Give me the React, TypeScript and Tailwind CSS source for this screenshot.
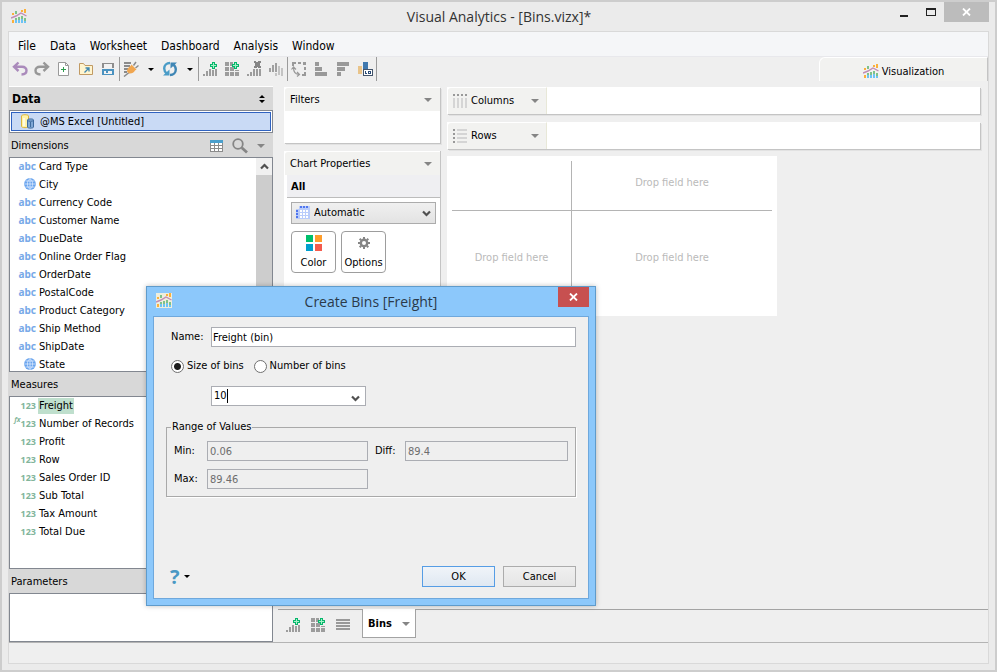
import React, { useState } from "react";

type IconProps = { className?: string };

const dimensions = [
  { name: "Card Type", kind: "abc" },
  { name: "City", kind: "geo" },
  { name: "Currency Code", kind: "abc" },
  { name: "Customer Name", kind: "abc" },
  { name: "DueDate", kind: "abc" },
  { name: "Online Order Flag", kind: "abc" },
  { name: "OrderDate", kind: "abc" },
  { name: "PostalCode", kind: "abc" },
  { name: "Product Category", kind: "abc" },
  { name: "Ship Method", kind: "abc" },
  { name: "ShipDate", kind: "abc" },
  { name: "State", kind: "geo" },
];

const measures = [
  { name: "Freight", calc: false },
  { name: "Number of Records", calc: true },
  { name: "Profit", calc: false },
  { name: "Row", calc: false },
  { name: "Sales Order ID", calc: false },
  { name: "Sub Total", calc: false },
  { name: "Tax Amount", calc: false },
  { name: "Total Due", calc: false },
];

const menus = ["File", "Data", "Worksheet", "Dashboard", "Analysis", "Window"];

// ---------- icons ----------

const LogoIcon = ({ className = "" }: IconProps) => (
  <svg className={className} width="16" height="15" viewBox="0 0 16 15" shapeRendering="crispEdges">
    <path fill="#fbb03b" d="M1 4h2v2H1zM10 1h2v2h-2zM13 0h2v4h-2zM1 11h2v3H1z" />
    <path fill="#7fc28a" d="M4 2h2v3H4zM4 9h2v2H4zM7 8h2v3H7zM10 7h2v3h-2zM13 9h2v3h-2z" />
    <path fill="#6cc3f5" d="M4 11h2v3H4zM7 11h2v3H7zM10 10h2v4h-2zM13 12h2v2h-2z" />
    <path fill="none" stroke="#c08bb5" strokeWidth="1.4" shapeRendering="auto" d="M0 9 5 7l5-3 5.500 3" />
  </svg>
);

const UndoIcon = () => (
  <svg width="16" height="16" viewBox="0 0 16 16" fill="none" stroke="#aa8abb" strokeWidth="2.4">
    <path d="M6.500 1.500 2 5.800l4.500 4.200M2.500 5.800h7.500c3 0 4.500 1.600 4.500 3.700S13 13.300 9.500 13.500" />
  </svg>
);

const RedoIcon = () => (
  <svg width="16" height="16" viewBox="0 0 16 16" fill="none" stroke="#979797" strokeWidth="2.4">
    <path d="M9.500 1.500l4.500 4.300-4.500 4.200M13.500 5.800H6c-3 0-4.500 1.600-4.500 3.700S3 13.300 6.500 13.500" />
  </svg>
);

const NewIcon = () => (
  <svg width="16" height="16" viewBox="0 0 16 16" fill="none">
    <path fill="#fff" stroke="#9a9a9a" d="M2.500 1.500h7l3 3v10h-10z" />
    <path stroke="#9a9a9a" d="M9.500 1.500v3h3" />
    <path stroke="#2f9e4f" d="M7.500 6v5M5 8.500h5" />
  </svg>
);

const OpenIcon = () => (
  <svg width="16" height="16" viewBox="0 0 16 16" fill="none">
    <path fill="#fff5cf" stroke="#c19a63" d="M1.500 2.500h4l1.500 2h7.500v9h-13z" />
    <path stroke="#3f87b0" strokeWidth="1.3" d="M6.500 11.500l4-4M7.500 7h3.500v3.500" />
  </svg>
);

const SaveIcon = () => (
  <svg width="16" height="16" viewBox="0 0 16 16" shapeRendering="crispEdges">
    <path fill="#8d8d8d" d="M2 2h12v5H2z" />
    <path fill="#f2f2f2" d="M4 3h8v4H4z" />
    <path fill="#4a92c0" d="M2 8h12v6H2z" />
    <path fill="#f2f2f2" d="M4 10h8v3H4z" />
    <path fill="#4a92c0" d="M6 10h2v2H6z" />
  </svg>
);

const PlugIcon = () => (
  <svg width="16" height="16" viewBox="0 0 16 16">
    <path fill="#8b8b8b" d="M1 1h7v2H1zM1 4h6v2H1zM1 7h4v2H1zM1 10h3v2H1z" />
    <path stroke="#8b8b8b" strokeWidth="1.5" d="M1 15.500l5-4M10.500 4.500 13 1M12.500 7l3-2.500" />
    <path fill="#f0a650" d="M8.500 3.500l5 5-1.500 1c-1 2-3.500 3.500-6 3L4 10.500c0-2.500 1.500-4.500 3.500-5.500z" />
  </svg>
);

const RefreshIcon = () => (
  <svg width="16" height="16" viewBox="0 0 16 16">
    <path fill="none" stroke="#4a9cc7" strokeWidth="2.400" d="M8 2C4.500 2 2.200 4.500 2.200 7.500c0 2 1 3.800 2.600 5" />
    <path fill="none" stroke="#3f86b5" strokeWidth="2.400" d="M8 14c3.500 0 5.800-2.500 5.800-5.500 0-2-1-3.800-2.600-5" />
    <path fill="#4a9cc7" d="M1 14.500h6.500V8.500z" />
    <path fill="#3f86b5" d="M15 1.500H8.500v6z" />
  </svg>
);

const Plus = ({ x, y }: { x: number; y: number }) => (
  <g>
    <path fill="#06b66b" d={`M${x + 2} ${y}h3v2h2v3h-2v2h-3v-2h-2v-3h2z`} />
    <path fill="#a5f0c8" d={`M${x + 3} ${y + 1}h1v2h2v1h-2v2h-1v-2h-2v-1h2z`} />
  </g>
);

const ChartAddIcon = () => (
  <svg width="16" height="16" viewBox="0 0 16 16" shapeRendering="crispEdges">
    <path fill="#9c9c9c" d="M1 13h2v2H1zM4 10h2v5H4zM7 8h2v7H7zM10 9h2v6h-2zM13 8h2v7h-2z" />
    <Plus x={8} y={1} />
  </svg>
);

const GridAddIcon = () => (
  <svg width="16" height="16" viewBox="0 0 16 16" shapeRendering="crispEdges">
    <path fill="#9c9c9c" d="M1 1h4v4H1zM6 1h3v4H6zM1 6h4v4H1zM6 6h4v4H6zM11 9h4v1h-4zM1 11h4v4H1zM6 11h4v4H6zM11 11h4v4h-4z" />
    <Plus x={8} y={1} />
  </svg>
);

const ChartRemoveIcon = () => (
  <svg width="16" height="16" viewBox="0 0 16 16" shapeRendering="crispEdges">
    <path fill="#9c9c9c" d="M1 13h2v2H1zM4 11h2v4H4zM7 8h2v7H7zM10 8h2v7h-2zM13 8h2v7h-2z" />
    <path fill="#858585" d="M8 0h2v1h2V0h3v2h-1v3h1v2h-3V6h-1v1H8V5h1V2H8z" />
  </svg>
);

const HistogramIcon = () => (
  <svg width="16" height="16" viewBox="0 0 16 16" shapeRendering="crispEdges">
    <path fill="#a0a0a0" d="M1 7h2v4H1zM4 4h2v7H4zM7 2h2v9H7z" />
    <path fill="#c3c3c3" d="M10 5h2v9h-2zM13 7h2v8h-2zM7 12h2v3H7z" />
  </svg>
);

const SwapIcon = () => (
  <svg width="16" height="16" viewBox="0 0 16 16" shapeRendering="crispEdges">
    <path fill="#999" d="M1 1h4v2H3v2H1zM7 1h3v2H7zM12 1h3v3h-3zM13 6h2v3h-2zM13 11h2v4h-4v-2h2z" />
    <path fill="none" stroke="#999" strokeWidth="1.200" shapeRendering="auto" d="M.5 8.500 2.500 6l2.500 2.500M2.500 6.500c0 4 1.500 6.500 5 7M6 11l2.500 2.500L6 15.500" />
  </svg>
);

const SortAscIcon = () => (
  <svg width="16" height="16" viewBox="0 0 16 16" shapeRendering="crispEdges">
    <path fill="#999" d="M2 1h4v4H2zM2 6h7v4H2zM2 11h12v4H2z" />
  </svg>
);

const SortDescIcon = () => (
  <svg width="16" height="16" viewBox="0 0 16 16" shapeRendering="crispEdges">
    <path fill="#999" d="M2 1h12v4H2zM2 6h8v4H2zM2 11h4v4H2z" />
  </svg>
);

const LabelIcon = () => (
  <svg width="16" height="16" viewBox="0 0 16 16" shapeRendering="crispEdges">
    <path fill="#e9c48a" d="M1 5h4v8H1z" />
    <path fill="#3f78ae" d="M6 1h5v12H6z" />
    <path fill="#fff" stroke="#44546a" d="M6.500 8.500h9v6h-9z" />
    <path fill="#2b4c77" d="M8 10h1v2h1v1H8zM11 10h3v3h-3z" />
    <path fill="#fff" d="M12 11h1v1h-1z" />
  </svg>
);

const GlobeIcon = () => (
  <svg width="12" height="12" viewBox="0 0 12 12">
    <circle cx="6" cy="6" r="5.900" fill="#6aa5ee" />
    <path fill="none" stroke="#e6f1ff" strokeWidth=".7" d="M6 .5v11M.5 6h11M1.500 3h9M1.500 9h9M6 .5C2.500 3 2.500 9 6 11.500M6 .5C9.500 3 9.500 9 6 11.500" />
  </svg>
);

const SourceIcon = () => (
  <svg width="14" height="15" viewBox="0 0 14 15">
    <path fill="#fff3a8" stroke="#dcb63c" d="M.5 2C.5.300 7.500.300 7.500 2v10.500c0 1.500-7 1.500-7 0z" />
    <path fill="#fffbe0" d="M2 4h2v8H2z" />
    <path fill="#7fa8d6" stroke="#3e6b9e" d="M6.500 6c0-1.500 6-1.500 6 0v7c0 1.500-6 1.500-6 0z" />
    <path fill="none" stroke="#3e6b9e" d="M6.500 6.500c1 1 5 1 6 0M9.500 8v5" />
  </svg>
);

const TableIcon = () => (
  <svg width="13" height="12" viewBox="0 0 13 12" shapeRendering="crispEdges">
    <path fill="#8b8b8b" d="M0 0h13v12H0z" />
    <path fill="#4a9fcc" d="M0 0h13v3H0z" />
    <path fill="#fff" d="M1 3h3v2H1zM5 3h3v2H5zM9 3h3v2H9zM1 6h3v2H1zM5 6h3v2H5zM9 6h3v2H9zM1 9h3v2H1zM5 9h3v2H5zM9 9h3v2H9z" />
  </svg>
);

const SearchIcon = () => (
  <svg width="16" height="16" viewBox="0 0 16 16" fill="none" stroke="#858585">
    <circle cx="6" cy="6" r="4.800" strokeWidth="1.800" />
    <path strokeWidth="2.800" d="M9.800 9.800 15 14.500" />
  </svg>
);

const ColumnsIcon = () => (
  <svg width="14" height="14" viewBox="0 0 14 14" shapeRendering="crispEdges">
    <path fill="#999" d="M0 0h2v2H0zM4 0h2v2H4zM8 0h2v2H8zM12 0h2v2h-2z" />
    <path fill="#d5d5d5" d="M0 4h2v10H0zM4 4h2v10H4zM8 4h2v10H8zM12 4h2v10h-2z" />
  </svg>
);

const RowsIcon = () => (
  <svg width="14" height="14" viewBox="0 0 14 14" shapeRendering="crispEdges">
    <path fill="#999" d="M0 0h2v2H0zM0 4h2v2H0zM0 8h2v2H0zM0 12h2v2H0z" />
    <path fill="#d5d5d5" d="M4 0h10v2H4zM4 4h10v2H4zM4 8h10v2H4zM4 12h10v2H4z" />
  </svg>
);

const GridTypeIcon = ({ className = "" }: IconProps) => (
  <svg className={className} width="14" height="13" viewBox="0 0 14 13" shapeRendering="crispEdges">
    <path fill="#b9ccfb" d="M3 0h11v13H0V3h3z" />
    <path fill="#5076ee" d="M4 0h2v2H4zM7 0h2v2H7zM10 0h2v2h-2zM0 4h2v2H0zM0 7h2v2H0zM0 10h2v2H0z" />
    <path fill="#fff" d="M4 4h2v2H4zM7 4h2v2H7zM10 4h2v2h-2zM4 7h2v2H4zM7 7h2v2H7zM10 7h2v2h-2zM4 10h2v2H4zM7 10h2v2H7zM10 10h2v2h-2z" />
  </svg>
);

const ColorIcon = () => (
  <svg width="16" height="16" viewBox="0 0 16 16" shapeRendering="crispEdges">
    <path fill="#00c06c" d="M0 0h7v7H0z" />
    <path fill="#ff9d2b" d="M9 0h7v7H9z" />
    <path fill="#009fce" d="M0 9h7v7H0z" />
    <path fill="#f45b4d" d="M9 9h7v7H9z" />
  </svg>
);

const GearIcon = () => (
  <svg width="12" height="12" viewBox="0 0 12 12">
    <circle cx="6" cy="6" r="3.200" fill="none" stroke="#858585" strokeWidth="2.400" />
    <path stroke="#858585" strokeWidth="2" d="M6 0v2M6 10v2M0 6h2M10 6h2M1.700 1.700l1.500 1.500M8.800 8.800l1.500 1.500M10.300 1.700 8.800 3.200M3.200 8.800 1.700 10.300" />
  </svg>
);

const LinesIcon = () => (
  <svg width="14" height="12" viewBox="0 0 14 12" shapeRendering="crispEdges">
    <path fill="#999" d="M0 0h14v2H0zM0 3h14v2H0zM0 6h14v2H0zM0 9h14v2H0z" />
  </svg>
);

const Caret = ({ className = "" }: IconProps) => (
  <svg className={className} width="8" height="4" viewBox="0 0 8 4">
    <path fill="currentColor" d="M0 0h8L4 4z" />
  </svg>
);

const SmallCaret = () => (
  <svg width="6" height="3" viewBox="0 0 6 3">
    <path d="M0 0h6L3 3z" />
  </svg>
);

const Chevron = ({ className = "" }: IconProps) => (
  <svg className={className} width="9" height="7" viewBox="0 0 9 7" fill="none" stroke="#505050" strokeWidth="2.200">
    <path d="M1 1.500l3.500 3.500L8 1.500" />
  </svg>
);

const CloseIcon = () => (
  <svg width="9" height="8" viewBox="0 0 9 8" stroke="#fff" strokeWidth="1.800">
    <path d="M1 .5l7 7M8 .5l-7 7" />
  </svg>
);

// ---------- small parts ----------

const ToolButton = ({ label, children }: { label: string; children: React.ReactNode }) => (
  <button type="button" aria-label={label} className="flex h-6 w-[22px] items-center justify-center">
    {children}
  </button>
);

const Separator = () => <div className="h-6 w-px bg-[#9b9b9b]" />;

const SectionHeader = ({ title, children }: { title: string; children?: React.ReactNode }) => (
  <div className="flex h-6 shrink-0 items-center bg-[#d8d8d8] pt-0.5 pr-2 pl-0.5">
    <h2>{title}</h2>
    <div className="ml-auto flex items-center gap-[9px] text-[#858585]">{children}</div>
  </div>
);

const PanelHeader = ({ title }: { title: string }) => (
  <div className="flex h-6 items-center justify-between rounded-tl border-t border-l border-white bg-[#f2f2f0] pt-px pr-2 pl-[5px]">
    <h2>{title}</h2>
    <button type="button" aria-label={`${title} menu`} className="text-[#858585]">
      <Caret />
    </button>
  </div>
);

const Shelf = ({ title, icon }: { title: string; icon: React.ReactNode }) => (
  <div className="flex h-[27px] bg-white shadow-[1px_1px_0_#c4c4c4,2px_2px_0_#e2e2e2]">
    <div className="flex w-[100px] items-center rounded-tl border-t border-r border-l border-white border-r-[#e8e8d8] bg-[#f2f2f0] pr-[7px] pl-[5px]">
      {icon}
      <span className="ml-1">{title}</span>
      <button type="button" aria-label={`${title} menu`} className="ml-auto text-[#858585]">
        <Caret />
      </button>
    </div>
  </div>
);

const ReadOnlyField = ({ id, label, value }: { id: string; label: string; value: string }) => (
  <>
    <label htmlFor={id}>{label}</label>
    <input id={id} readOnly value={value} className="h-5 w-full min-w-0 border border-[#abadb3] bg-transparent px-0.5 text-[#6d6d6d] outline-none" />
  </>
);

const radioClass =
  "size-[13px] appearance-none rounded-full border border-[#707070] bg-white checked:bg-[radial-gradient(circle,#1c1c1c_3px,#ffffff_4px)]";

const CreateBinsDialog = () => {
  const [name, setName] = useState("Freight (bin)");
  const [mode, setMode] = useState("size");
  const [size, setSize] = useState("10");

  return (
    <div
      role="dialog"
      aria-labelledby="dialog-title"
      className="absolute top-[284px] left-[144px] flex h-[320px] w-[450px] flex-col border border-[#5f9bcb] bg-[#8cc8fb] px-1.5 pb-1.5 shadow-[0_0_5px_rgba(0,0,0,0.25)]"
    >
      <div className="flex h-[29px] shrink-0 items-start">
        <LogoIcon className="mt-1.5 ml-[3px] bg-[#eeeedd]" />
        <h1 id="dialog-title" className="flex-1 pl-3 text-center font-['Open_Sans',sans-serif] text-[14px] leading-[29px] text-[#2b3a4a]">
          Create Bins [Freight]
        </h1>
        <button type="button" aria-label="Close" className="flex h-5 w-[31px] items-center justify-center bg-[#c75050]">
          <CloseIcon />
        </button>
      </div>

      <form className="flex flex-1 flex-col border border-[#6fa8dc] bg-[#efefef] pt-2.5 pr-3 pb-[11px] pl-3" onSubmit={(e) => e.preventDefault()}>
        <div className="flex items-center pl-[5px]">
          <label htmlFor="bin-name" className="w-10">Name:</label>
          <input
            id="bin-name"
            value={name}
            onChange={(e) => setName(e.target.value)}
            className="h-5 flex-1 border border-[#abadb3] bg-white px-px outline-none"
          />
        </div>

        <div className="mt-[11px] flex h-4 items-center gap-[10px] pl-[5px]">
          <label className="flex items-center gap-[3px]">
            <input type="radio" name="mode" checked={mode === "size"} onChange={() => setMode("size")} className={radioClass} />
            Size of bins
          </label>
          <label className="flex items-center gap-[3px]">
            <input type="radio" name="mode" checked={mode === "count"} onChange={() => setMode("count")} className={radioClass} />
            Number of bins
          </label>
        </div>

        <div className="relative mt-3 ml-[45px] flex h-5 w-[155px] border border-[#abadb3] bg-white">
          <input
            aria-label="Size of bins"
            value={size}
            onChange={(e) => setSize(e.target.value)}
            className="w-full min-w-0 bg-transparent pl-0.5 outline-none"
          />
          <span className="absolute top-0.5 left-[15px] h-3.5 w-px bg-black" />
          <button type="button" aria-label="Show sizes" className="flex w-3.5 shrink-0 items-center pt-1">
            <Chevron />
          </button>
        </div>

        <fieldset className="mt-3.5 border border-[#a9a9a9] pr-[7px] pb-[7px] pl-[7px] shadow-[1px_1px_0_#ffffff]">
          <legend className="-ml-[3px] px-px leading-[14px]">Range of Values</legend>
          <div className="mt-[7px] grid grid-cols-[33px_161px_37px_1fr] items-center gap-y-2 [&>label:nth-of-type(2)]:pl-[7px]">
            <ReadOnlyField id="min" label="Min:" value="0.06" />
            <ReadOnlyField id="diff" label="Diff:" value="89.4" />
            <ReadOnlyField id="max" label="Max:" value="89.46" />
          </div>
        </fieldset>

        <div className="mt-auto flex items-center gap-2">
          <button type="button" aria-label="Help" className="mr-auto flex items-center gap-1 pl-1">
            <span className="font-['Open_Sans',sans-serif] text-[20px] leading-5 font-bold text-[#4a98c4]">?</span>
            <SmallCaret />
          </button>
          <button type="submit" className="h-[21px] w-[73px] border border-[#569de5] bg-linear-to-b from-[#f0f4f9] to-[#dfe8f2]">
            OK
          </button>
          <button type="button" className="h-[21px] w-[73px] border border-[#acacac] bg-linear-to-b from-[#f0f0f0] to-[#e5e5e5]">
            Cancel
          </button>
        </div>
      </form>
    </div>
  );
};

const DataPane = () => (
  <aside className="flex w-[264px] shrink-0 flex-col">
    <div className="flex h-6 shrink-0 items-center justify-between border-t border-white bg-[#d8d8d8] pr-2 pl-[3px]">
      <h2 className="text-[12px] font-bold">Data</h2>
      <button type="button" aria-label="Sort sources">
        <svg width="6" height="8" viewBox="0 0 6 8">
          <path d="M0 3h6L3 0zM0 5h6L3 8z" />
        </svg>
      </button>
    </div>
    <div className="h-[23px] shrink-0 border border-[#828790] bg-white p-px">
      <button type="button" className="flex h-full w-full items-center gap-[5px] border border-[#2f62c0] bg-[#c9daf5] pl-[9px]">
        <SourceIcon />
        @MS Excel [Untitled]
      </button>
    </div>

    <SectionHeader title="Dimensions">
      <button type="button" aria-label="View data"><TableIcon /></button>
      <button type="button" aria-label="Find field"><SearchIcon /></button>
      <button type="button" aria-label="Dimensions menu"><Caret /></button>
    </SectionHeader>
    <div className="flex min-h-0 flex-1 border border-[#828790] bg-white">
      <ul className="flex-1 overflow-hidden">
        {dimensions.map((d) => (
          <li key={d.name} className="flex h-[18px] items-center">
            <span className="flex w-[29px] justify-end pr-[3px] pb-0.5 font-['Noto_Sans',sans-serif] text-[10px] leading-4 font-bold text-[#78a9e8]">
              {d.kind === "geo" ? <GlobeIcon /> : "abc"}
            </span>
            {d.name}
          </li>
        ))}
      </ul>
      <div className="flex w-4 flex-col bg-[#f0f0f0]">
        <button type="button" aria-label="Scroll up" className="flex h-[17px] items-center justify-center">
          <Chevron className="rotate-180" />
        </button>
        <div className="h-40 bg-[#cdcdcd]" />
      </div>
    </div>

    <SectionHeader title="Measures" />
    <ul className="h-[173px] shrink-0 border border-[#828790] bg-white">
      {measures.map((m, i) => (
        <li key={m.name} className="flex h-[18px] items-center">
          <span className="flex w-7 items-start justify-end pr-0.5 font-['Noto_Sans',sans-serif] text-[9px] leading-4 font-bold text-[#82b59b]">
            {m.calc && <i className="text-[7px] leading-2">fx</i>}
            123
          </span>
          <span className={i === 0 ? "bg-[#bfdfcd] px-px" : "px-px"}>{m.name}</span>
        </li>
      ))}
    </ul>

    <SectionHeader title="Parameters" />
    <div className="h-[49px] shrink-0 border border-[#828790] bg-white" />
  </aside>
);

const ChartProperties = () => (
  <section className="flex-1 bg-white shadow-[1px_0_0_#c4c4c4]">
    <PanelHeader title="Chart Properties" />
    <h3 className="ml-[3px] h-[23px] border-b border-[#bcbcbc] bg-[#efeff2] pl-1 leading-6 font-bold">All</h3>
    <div className="py-1 pr-1 pl-[7px]">
      <div className="relative">
        <select aria-label="Chart type" className="h-[22px] w-full appearance-none border border-[#acacac] bg-linear-to-b from-[#f0f0f0] to-[#e3e3e3] pl-[22px]">
          <option>Automatic</option>
        </select>
        <GridTypeIcon className="absolute top-1 left-[5px]" />
        <Chevron className="absolute top-2 right-[5px]" />
      </div>
      <div className="mt-[7px] flex gap-[5px]">
        <button type="button" className="flex h-[42px] w-[45px] flex-col items-center justify-between rounded border border-[#9d9d9d] pt-[3px] pb-px">
          <ColorIcon />
          Color
        </button>
        <button type="button" className="flex h-[42px] w-[45px] flex-col items-center justify-between rounded border border-[#9d9d9d] pt-[5px] pb-px">
          <GearIcon />
          Options
        </button>
      </div>
    </div>
  </section>
);

const DropCanvas = () => (
  <div className="mt-[7px] w-[330px] bg-white p-[5px]">
    <div className="grid h-[150px] grid-cols-[120px_1fr] grid-rows-[50px_1fr] text-[#bababa]">
      <div className="border-r border-b border-[#b4b4b4]" />
      <div className="flex items-center justify-center border-b border-[#b4b4b4] pb-1.5">Drop field here</div>
      <div className="flex items-center justify-center border-r border-[#b4b4b4] pb-1.5">Drop field here</div>
      <div className="flex items-center justify-center pb-1.5">Drop field here</div>
    </div>
  </div>
);

export default function App() {
  return (
    <div className="relative flex h-screen min-h-[672px] w-full flex-col border-2 border-[#cdcdcd] bg-[#ebebeb] px-1.5 pb-1.5 font-['DejaVu_Sans_Condensed','Liberation_Sans',sans-serif] text-[11px] leading-4 text-black">
      <header className="flex h-[29px] shrink-0 items-start">
        <LogoIcon className="mt-[7px] ml-[3px]" />
        <h1 className="flex-1 pl-20 text-center font-['Open_Sans',sans-serif] text-[14px] leading-[29px] text-[#333]">
          Visual Analytics - [Bins.vizx]*
        </h1>
        <div className="flex h-5">
          <button type="button" aria-label="Minimize" className="flex w-[26px] items-end justify-center pb-[5px]">
            <span className="h-0.5 w-2 bg-[#222]" />
          </button>
          <button type="button" aria-label="Maximize" className="flex w-[27px] items-center justify-center">
            <span className="h-2 w-2.5 border border-t-2 border-[#222]" />
          </button>
          <button type="button" aria-label="Close window" className="flex w-[45px] items-center justify-center bg-[#bcbcbc]">
            <CloseIcon />
          </button>
        </div>
      </header>

      <div className="flex min-h-0 flex-1 flex-col border border-[#d9d9d9] bg-[#efefef]">
        <nav className="flex h-[25px] shrink-0 items-center gap-3.5 border-b border-[#e8e8ec] bg-[#f5f6f8] pt-1 pl-[9px] text-[12px]">
          {menus.map((m) => (
            <button key={m} type="button">{m}</button>
          ))}
        </nav>

        <div className="flex h-[29px] shrink-0 items-start justify-between">
          <div className="flex items-center">
            <ToolButton label="Undo"><UndoIcon /></ToolButton>
            <ToolButton label="Redo"><RedoIcon /></ToolButton>
            <ToolButton label="New"><NewIcon /></ToolButton>
            <ToolButton label="Open"><OpenIcon /></ToolButton>
            <ToolButton label="Save"><SaveIcon /></ToolButton>
            <Separator />
            <ToolButton label="Connect"><PlugIcon /></ToolButton>
            <button type="button" aria-label="Connect options" className="flex h-6 w-[17px] items-center justify-center"><SmallCaret /></button>
            <ToolButton label="Refresh"><RefreshIcon /></ToolButton>
            <button type="button" aria-label="Refresh options" className="flex h-6 w-[17px] items-center justify-center"><SmallCaret /></button>
            <Separator />
            <ToolButton label="Add chart"><ChartAddIcon /></ToolButton>
            <ToolButton label="Add dashboard"><GridAddIcon /></ToolButton>
            <ToolButton label="Clear chart"><ChartRemoveIcon /></ToolButton>
            <ToolButton label="Histogram"><HistogramIcon /></ToolButton>
            <Separator />
            <ToolButton label="Swap axes"><SwapIcon /></ToolButton>
            <ToolButton label="Sort ascending"><SortAscIcon /></ToolButton>
            <ToolButton label="Sort descending"><SortDescIcon /></ToolButton>
            <ToolButton label="Labels"><LabelIcon /></ToolButton>
            <Separator />
          </div>
          <button type="button" className="flex h-6 w-[169px] items-center justify-center gap-[3px] rounded-tl-md border-t border-r border-l border-white border-r-[#c4c4c4] bg-[#f2f2f0] pt-1">
            <LogoIcon />
            Visualization
          </button>
        </div>

        <div className="flex min-h-0 flex-1">
          <DataPane />
          <main className="flex min-w-0 flex-1 flex-col">
            <div className="flex min-h-0 flex-1 gap-[7px] pt-px pr-2 pb-8 pl-[11px]">
              <div className="flex w-[156px] shrink-0 flex-col gap-2">
                <section className="h-14 bg-white shadow-[1px_1px_0_#c4c4c4,2px_2px_0_#e2e2e2]">
                  <PanelHeader title="Filters" />
                </section>
                <ChartProperties />
              </div>
              <div className="flex min-w-0 flex-1 flex-col">
                <div className="flex flex-col gap-2">
                  <Shelf title="Columns" icon={<ColumnsIcon />} />
                  <Shelf title="Rows" icon={<RowsIcon />} />
                </div>
                <DropCanvas />
              </div>
            </div>

            <footer className="ml-[5px] flex h-[33px] shrink-0 items-start border-t border-[#a3a3a3] pl-0.5">
              <div className="mr-[7px] grid h-[30px] w-[75px] grid-cols-3 items-center justify-items-center">
                <button type="button" aria-label="Add chart sheet"><ChartAddIcon /></button>
                <button type="button" aria-label="Add dashboard sheet"><GridAddIcon /></button>
                <button type="button" aria-label="List sheets"><LinesIcon /></button>
              </div>
              <button type="button" className="-mt-px flex h-[29px] w-[54px] items-center justify-between border-r border-b border-l border-[#a3a3a3] bg-white pt-0.5 pr-[5px] pl-[5px] font-bold">
                Bins
                <Caret className="text-[#858585]" />
              </button>
            </footer>
          </main>
        </div>

        <div className="h-[21px] shrink-0 border-t border-[#b4b4b4]" />
      </div>

      <CreateBinsDialog />
    </div>
  );
}
